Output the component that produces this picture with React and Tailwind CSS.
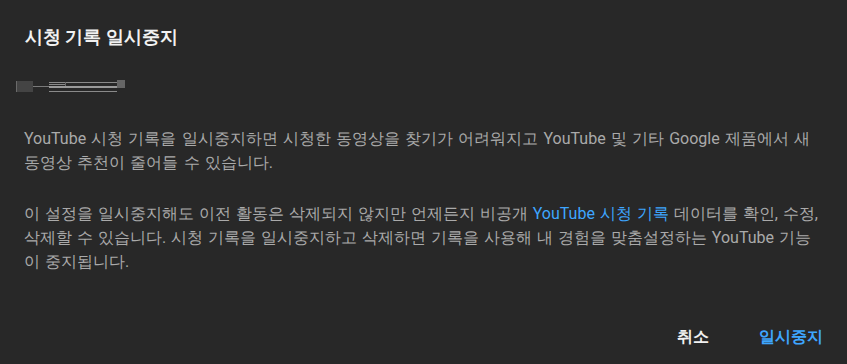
import React from "react";

export default function App() {
  const font = { fontFamily: 'Roboto, sans-serif' };
  return (
    <div className="w-[847px] h-[364px] bg-[#282828] overflow-hidden" style={font}>
      <div className="px-6 pt-[23px] flex flex-col h-full">
        <h2 className="text-[18px] leading-[28px] font-bold text-[#f1f1f1] pl-px">시청 기록 일시중지</h2>
        <svg className="mt-[29px] -ml-[9px] block" width="111" height="13" viewBox="0 0 111 13">
          <rect x="1" y="1" width="17" height="11" fill="#444" />
          <rect x="1" y="1" width="1" height="11" fill="#6a6a6a" />
          <rect x="18" y="6" width="16" height="1" fill="#7a7a7a" />
          <rect x="34" y="2" width="68" height="1" fill="#8a8a8a" />
          <rect x="34" y="4" width="16" height="1" fill="#8a8a8a" />
          <rect x="50" y="2" width="1" height="6" fill="#6a6a6a" />
          <rect x="34" y="6" width="68" height="2" fill="#9a9a9a" />
          <rect x="34" y="11" width="68" height="1" fill="#8a8a8a" />
          <rect x="102" y="0" width="8" height="8" fill="#666" />
        </svg>
        <p className="mt-[34px] text-[16px] leading-[24px] text-[#aaaaaa] [word-spacing:1.2px]">
          YouTube 시청 기록을 일시중지하면 시청한 동영상을 찾기가 어려워지고 YouTube 및 기타 Google 제품에서 새 동영상 추천이 줄어들 수 있습니다.
        </p>
        <p className="mt-[27px] text-[16px] leading-[24px] text-[#aaaaaa] [word-spacing:1px]">
          이 설정을 일시중지해도 이전 활동은 삭제되지 않지만 언제든지 비공개{" "}
          <span className="text-[#3ea6ff]">YouTube 시청 기록</span> 데이터를 확인, 수정, 삭제할 수 있습니다. 시청 기록을 일시중지하고 삭제하면 기록을 사용해 내 경험을 맞춤설정하는 YouTube 기능이 중지됩니다.
        </p>
        <div className="mt-[45px] flex justify-end items-center gap-[50px]">
          <button className="h-[36px] text-[16px] font-bold text-[#f1f1f1]">취소</button>
          <button className="h-[36px] text-[16px] font-bold text-[#3ea6ff]">일시중지</button>
        </div>
      </div>
    </div>
  );
}
